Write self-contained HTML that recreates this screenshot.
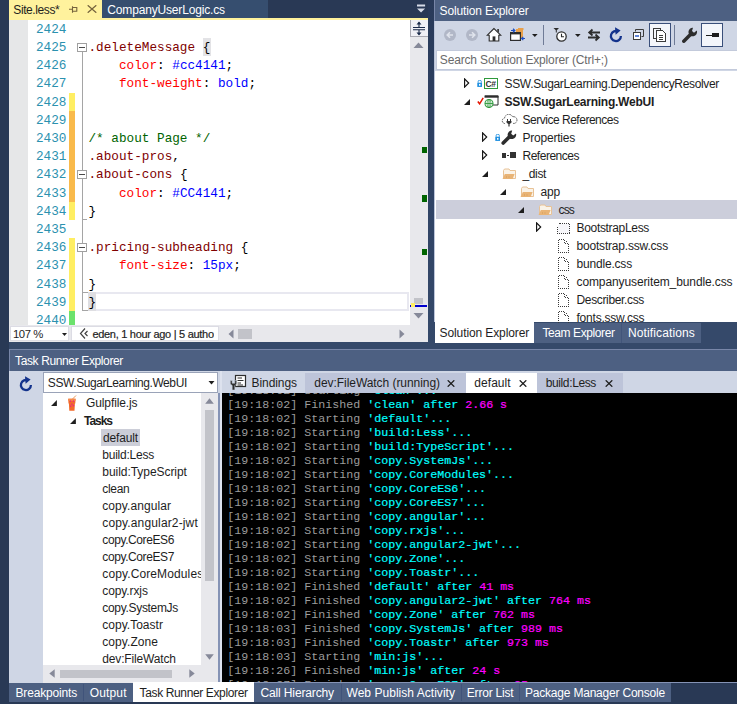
<!DOCTYPE html><html><head><meta charset="utf-8"><title>Visual Studio</title><style>
*{box-sizing:border-box;margin:0;padding:0}
html,body{width:737px;height:704px;overflow:hidden;background:#293955}
body{position:relative;font-family:"Liberation Sans",sans-serif;font-size:12px;color:#1e1e1e}
.a{position:absolute}
.t{position:absolute;white-space:pre;line-height:16px;height:16px}
.w{color:#fff}
.mono{font-family:"Liberation Mono",monospace}
.code{position:absolute;white-space:pre;font-family:"Liberation Mono",monospace;font-size:12.7px;line-height:18px;height:18px;left:88.5px;color:#000;transform-origin:0 60%;transform:scaleY(1.05)}
.ln{position:absolute;white-space:pre;font-family:"Liberation Mono",monospace;font-size:12.7px;line-height:18px;height:18px;left:36px;color:#2b91af;transform-origin:0 60%;transform:scaleY(1.05)}
.sel{color:#800000}.prop{color:#ff0000}.val{color:#0000ff}.com{color:#006400}
.con{position:absolute;white-space:pre;font-family:"Liberation Mono",monospace;font-size:11.67px;line-height:14px;height:14px;left:227.3px;color:#9c9c9c}
.cy{color:#00ffff;-webkit-text-stroke:0.2px}.mg{color:#ff00ff;-webkit-text-stroke:0.2px}
</style></head><body>
<div class="a" style="left:427.5px;top:0px;width:7.5px;height:349px;background:linear-gradient(#293a59,#2e4163 40%,#35496a);"></div>
<div class="a" style="left:9px;top:342px;width:728px;height:7px;background:#35496a;"></div>
<div class="a" style="left:435px;top:322px;width:302px;height:20px;background:#35496a;"></div>
<div class="a" style="left:9px;top:0px;width:93px;height:20px;background:#fff29d;"></div>
<div class="t " style="left:13.3px;top:1.8px;letter-spacing:-0.403px;">Site.less*</div>
<div class="a" style="left:102px;top:0px;width:166px;height:17.6px;background:#364e6f;"></div>
<div class="t w" style="left:107.3px;top:1.8px;letter-spacing:-0.169px;">CompanyUserLogic.cs</div>
<div class="a" style="left:9px;top:17.6px;width:419px;height:2.4px;background:#fff29d;"></div>
<svg class="a" style="left:68px;top:5px" width="11" height="9" viewBox="0 0 11 9"><path d="M1 4.3H4.5M4.5 1.2V7.8M4.5 2.5H8.800V6M4.500 6.200H9.300" fill="none" stroke="#75633d" stroke-width="1.1"/></svg>
<svg class="a" style="left:87px;top:5px" width="10" height="8" viewBox="0 0 10 8"><path d="M0.700 0.300L9.300 7.700M9.300 0.300L0.700 7.700" fill="none" stroke="#75633d" stroke-width="1.3"/></svg>
<svg class="a" style="left:416px;top:3.500px" width="10" height="9" viewBox="0 0 10 9"><path d="M1 0.400H9.100V2.500H1Z M1 4.500H9.100L5.050 8.500Z" fill="#d7dce8"/></svg>
<div class="a" style="left:9px;top:20px;width:401px;height:305px;background:#fff;"></div>
<div class="a" style="left:9px;top:20px;width:19px;height:305px;background:#e6e7e8;"></div>
<div class="a" style="left:410px;top:20px;width:18px;height:305px;background:#e8e8ec;"></div>
<div class="a" style="left:410px;top:20px;width:18px;height:17px;background:#f0f0f6;border-left:1px solid #a9a9b2;border-bottom:1px solid #a9a9b2"></div>
<svg class="a" style="left:412px;top:21px" width="14" height="15" viewBox="0 0 14 15"><path d="M1 6.5H13M1 8.7H13M7 1.5V6M7 9V13.5" stroke="#1b2a4a" stroke-width="1.1" fill="none"/><path d="M7 0.5L9.5 3.5H4.5ZM7 14.5L9.5 11.5H4.5Z" fill="#1b2a4a"/></svg>
<svg class="a" style="left:413px;top:42px" width="11" height="7" viewBox="0 0 11 7"><path d="M5.5 0.5L10.5 6H0.5Z" fill="#868999"/></svg>
<svg class="a" style="left:413px;top:312px" width="11" height="7" viewBox="0 0 11 7"><path d="M5.5 6.5L10.5 1H0.5Z" fill="#868999"/></svg>
<div class="a" style="left:422px;top:147px;width:5px;height:6px;background:#006400;"></div>
<div class="a" style="left:422px;top:194.6px;width:5px;height:7.4px;background:#006400;"></div>
<div class="a" style="left:422px;top:248.7px;width:5px;height:6.5px;background:#006400;"></div>
<div class="a" style="left:414px;top:298px;width:9px;height:6px;background:#c2c3c9;"></div>
<div class="a" style="left:410px;top:305px;width:17px;height:1.5px;background:#0000cd;"></div>
<div class="a" style="left:411px;top:303px;width:4px;height:4px;background:#ffee62;"></div>
<div class="a" style="left:69px;top:92.8px;width:5.5px;height:18.2px;background:#ffee62;"></div>
<div class="a" style="left:69px;top:111.0px;width:5.5px;height:91.0px;background:#f9ba4b;"></div>
<div class="a" style="left:69px;top:201.9px;width:5.5px;height:18.2px;background:#ffee62;"></div>
<div class="a" style="left:69px;top:238.3px;width:5.5px;height:72.8px;background:#ffee62;"></div>
<div class="a" style="left:69px;top:311.0px;width:5.5px;height:14.0px;background:#6ce26c;"></div>
<div class="a" style="left:82px;top:52px;width:1px;height:258px;background:#a5a5a5;"></div>
<div class="a" style="left:82px;top:219px;width:5px;height:1px;background:#a5a5a5;"></div>
<div class="a" style="left:82px;top:309.7px;width:6px;height:1px;background:#a5a5a5;"></div>
<div class="a" style="left:82px;top:292.2px;width:6px;height:1px;background:#a5a5a5;"></div>
<div class="a" style="left:77.200px;top:42.9px;width:9.600px;height:9.300px;background:#fff;border:1px solid #a0a0a0"></div>
<div class="a" style="left:79.2px;top:47.0px;width:5.6px;height:1.1px;background:#4a4a4a;"></div>
<div class="a" style="left:77.200px;top:169.9px;width:9.600px;height:9.300px;background:#fff;border:1px solid #a0a0a0"></div>
<div class="a" style="left:79.2px;top:174.0px;width:5.6px;height:1.1px;background:#4a4a4a;"></div>
<div class="a" style="left:77.200px;top:242.9px;width:9.600px;height:9.300px;background:#fff;border:1px solid #a0a0a0"></div>
<div class="a" style="left:79.2px;top:247.0px;width:5.6px;height:1.1px;background:#4a4a4a;"></div>
<div class="a" style="left:88px;top:291.800px;width:321px;height:18.800px;border-top:2px solid #e8e8f0;border-bottom:2px solid #e8e8f0;border-right:2px solid #e8e8f0"></div>
<div class="a" style="left:88px;top:292px;width:7.8px;height:18.5px;background:#dedee2;"></div>
<div class="a" style="left:203.2px;top:38.2px;width:7.6px;height:17.8px;background:#e3e3e6;"></div>
<div class="a" style="left:9px;top:20px;width:401px;height:305px;overflow:hidden"><div class="a" style="left:-9px;top:-20px">
<div class="ln" style="top:20.9px">2424</div>
<div class="ln" style="top:39.09px">2425</div>
<div class="code" style="top:39.09px"><span class="sel">.deleteMessage</span> {</div>
<div class="ln" style="top:57.28px">2426</div>
<div class="code" style="top:57.28px">    <span class="prop">color</span>: <span class="val">#cc4141</span>;</div>
<div class="ln" style="top:75.47px">2427</div>
<div class="code" style="top:75.47px">    <span class="prop">font-weight</span>: <span class="val">bold</span>;</div>
<div class="ln" style="top:93.66px">2428</div>
<div class="ln" style="top:111.85px">2429</div>
<div class="ln" style="top:130.04px">2430</div>
<div class="code" style="top:130.04px"><span class="com">/* about Page */</span></div>
<div class="ln" style="top:148.23px">2431</div>
<div class="code" style="top:148.23px"><span class="sel">.about-pros</span>,</div>
<div class="ln" style="top:166.42px">2432</div>
<div class="code" style="top:166.42px"><span class="sel">.about-cons</span> {</div>
<div class="ln" style="top:184.61px">2433</div>
<div class="code" style="top:184.61px">    <span class="prop">color</span>: <span class="val">#CC4141</span>;</div>
<div class="ln" style="top:202.8px">2434</div>
<div class="code" style="top:202.8px">}</div>
<div class="ln" style="top:220.99px">2435</div>
<div class="ln" style="top:239.18px">2436</div>
<div class="code" style="top:239.18px"><span class="sel">.pricing-subheading</span> {</div>
<div class="ln" style="top:257.37px">2437</div>
<div class="code" style="top:257.37px">    <span class="prop">font-size</span>: <span class="val">15px</span>;</div>
<div class="ln" style="top:275.56px">2438</div>
<div class="code" style="top:275.56px">}</div>
<div class="ln" style="top:293.75px">2439</div>
<div class="code" style="top:293.75px">}</div>
<div class="ln" style="top:311.94px">2440</div>
</div></div>
<div class="a" style="left:9px;top:325px;width:419px;height:17px;background:#e8e8ec;"></div>
<div class="a" style="left:10px;top:326px;width:59px;height:15px;background:#fff;border:1px solid #dcdce4"></div>
<div class="t " style="left:13px;top:325.7px;font-size:11.3px;letter-spacing:-0.409px;">107 %</div>
<svg class="a" style="left:61.500px;top:332.500px" width="5" height="3" viewBox="0 0 5 3"><path d="M0 0H5L2.500 3Z" fill="#1e1e1e"/></svg>
<div class="a" style="left:71px;top:326px;width:148px;height:15px;background:#fff;border:1px solid #dcdce4"></div>
<svg class="a" style="left:79px;top:328px" width="9" height="11" viewBox="0 0 9 11"><path d="M6 0.5L1.5 5.5L6 10.5M8.5 3L6 5.5L8.5 8" fill="none" stroke="#424242" stroke-width="1.2"/></svg>
<div class="a" style="left:72px;top:326px;width:142.300px;height:15px;overflow:hidden"><div class="t" style="left:20.400px;top:-0.300px;font-size:11px;letter-spacing:-0.290px;-webkit-text-stroke:0.200px">eden, 1 hour ago | 5 authors</div></div>
<svg class="a" style="left:228px;top:329px" width="6" height="10" viewBox="0 0 6 10"><path d="M5.5 0.5V9.5L0.5 5Z" fill="#868999"/></svg>
<div class="a" style="left:238px;top:329px;width:14px;height:10px;background:#c2c3c9;"></div>
<svg class="a" style="left:399px;top:329px" width="6" height="10" viewBox="0 0 6 10"><path d="M0.5 0.5V9.5L5.5 5Z" fill="#868999"/></svg>
<div class="a" style="left:434px;top:0px;width:303px;height:20.5px;background:#4d6082;border-left:1px solid #7886a8"></div>
<div class="t w" style="left:439.6px;top:2.9px;letter-spacing:-0.141px;">Solution Explorer</div>
<div class="a" style="left:434px;top:20.5px;width:303px;height:51px;background:#cfd6e5;"></div>
<div class="a" style="left:435.5px;top:49.5px;width:302px;height:20.3px;background:#fff;border:1px solid #c3cadb"></div>
<div class="a" style="left:435px;top:69.8px;width:302px;height:1.4px;background:#cfd6e5;"></div>
<div class="t " style="left:439.8px;top:51.8px;color:#6a6a6a;letter-spacing:-0.154px;">Search Solution Explorer (Ctrl+;)</div>
<div class="a" style="left:435px;top:71.2px;width:302px;height:250.8px;background:#fff;"></div>
<div class="a" style="left:434px;top:20.5px;width:1.2px;height:301.5px;background:#bcc5da;"></div>
<svg class="a" style="left:443px;top:28px" width="14" height="14" viewBox="0 0 14 14"><circle cx="7" cy="7" r="6" fill="#b1b7c7"/><path d="M10 7H4.5M7 4.2L4.2 7L7 9.8" fill="none" stroke="#dfe3ec" stroke-width="1.6"/></svg>
<svg class="a" style="left:464.5px;top:28px" width="14" height="14" viewBox="0 0 14 14"><circle cx="7" cy="7" r="6" fill="#b1b7c7"/><path d="M4 7H9.5M7 4.2L9.8 7L7 9.8" fill="none" stroke="#dfe3ec" stroke-width="1.6"/></svg>
<svg class="a" style="left:486px;top:27px" width="16" height="15" viewBox="0 0 16 15"><path d="M8 1.500L1.300 8.200H3.200V14H12.800V8.200H14.700Z" fill="#fff" stroke="#2d2d2d" stroke-width="1.100" stroke-linejoin="miter"/><path d="M11.300 2H12.900V5.800L11.300 4.200Z" fill="#2d2d2d"/><rect x="6.600" y="9.400" width="2.800" height="4.600" fill="#2d2d2d"/></svg>
<svg class="a" style="left:509px;top:27px" width="17" height="15" viewBox="0 0 17 15"><path d="M7 2H14V11H7Z" fill="#e8a04a"/><path d="M9 1H14.5V3H9Z" fill="#e8a04a"/><rect x="1.6" y="5.6" width="9.8" height="7.8" fill="#fff" stroke="#2d2d2d" stroke-width="1.2"/><rect x="1" y="5" width="11" height="2.4" fill="#2d2d2d"/><path d="M2 3.5H5M4 1.8L5.8 3.5L4 5.2" stroke="#1c4fc4" stroke-width="1.2" fill="none"/><path d="M16 11.5H13.2M14.3 9.8L12.6 11.5L14.3 13.2" stroke="#1c4fc4" stroke-width="1.2" fill="none"/></svg>
<svg class="a" style="left:531.500px;top:33.500px" width="6" height="3" viewBox="0 0 6 3"><path d="M0 0H5.600L2.800 3Z" fill="#1e1e1e"/></svg>
<div class="a" style="left:543px;top:25px;width:1px;height:20px;background:#6f7b96"></div>
<svg class="a" style="left:553px;top:27px" width="15" height="16" viewBox="0 0 15 16"><circle cx="8.5" cy="9.5" r="4.7" fill="#fff" stroke="#2d2d2d" stroke-width="1.3"/><path d="M8.5 6.8V9.8H11" fill="none" stroke="#2d2d2d" stroke-width="1.1"/><path d="M0.5 1H6L3.8 3.2V5.5H2.8V3.2Z" fill="#2d2d2d"/></svg>
<svg class="a" style="left:575px;top:33.500px" width="6" height="3" viewBox="0 0 6 3"><path d="M0 0H5.600L2.800 3Z" fill="#1e1e1e"/></svg>
<svg class="a" style="left:587px;top:28px" width="14" height="14" viewBox="0 0 14 14"><path d="M13 4.500H2.500M5.500 1.500L2.200 4.500L5.500 7.500" fill="none" stroke="#2d2d2d" stroke-width="1.800"/><path d="M1 9.500H11.500M8.500 6.500L11.800 9.500L8.500 12.500" fill="none" stroke="#2d2d2d" stroke-width="1.800"/></svg>
<svg class="a" style="left:609px;top:27px" width="14" height="16" viewBox="0 0 14 16"><path d="M9.200 4.600A5 5 0 1 0 11.900 9" fill="none" stroke="#14338c" stroke-width="2.300"/><path d="M6 0.300L11.600 3.600L6.600 7.800Z" fill="#14338c"/></svg>
<svg class="a" style="left:632px;top:28px" width="13" height="13" viewBox="0 0 13 13"><path d="M3.5 3.5V1.5H11.5V8.5H9.5" fill="none" stroke="#3b3b3b" stroke-width="1"/><rect x="1.5" y="4.5" width="7" height="7" fill="#fff" stroke="#3b3b3b" stroke-width="1"/><path d="M3 8H7" stroke="#1c4fc4" stroke-width="1.4"/></svg>
<div class="a" style="left:649px;top:23px;width:22px;height:24px;background:#f4f6fb;border:1px solid #3a4f7a"></div>
<svg class="a" style="left:652px;top:27px" width="16" height="16" viewBox="0 0 16 16" shape-rendering="crispEdges"><path d="M4.500 11.500H1.500V1.500H8.500V3" fill="none" stroke="#3b3b3b" stroke-width="1"/><path d="M4.500 3.500H10.500L13.500 6.500V14.500H4.500Z" fill="#fff" stroke="#3b3b3b" stroke-width="1"/><path d="M7 8.500H11M7 10.500H11M7 12.500H11" stroke="#3b3b3b" stroke-width="1"/></svg>
<div class="a" style="left:674px;top:25px;width:1px;height:20px;background:#6f7b96"></div>
<svg class="a" style="left:682px;top:27px" width="16" height="16" viewBox="0 0 16 16"><path d="M1.800 14.200L8.200 7.800" stroke="#2d2d2d" stroke-width="3.500" stroke-linecap="round"/><path d="M14.800 3.600A4.300 4.300 0 1 1 11 0.700L10 4L12 5.800Z" fill="#2d2d2d"/></svg>
<div class="a" style="left:701px;top:23px;width:22px;height:24px;background:#f4f6fb;border:1px solid #3a4f7a"></div>
<div class="a" style="left:706px;top:35px;width:13px;height:1.4px;background:#1e1e1e"></div><div class="a" style="left:712px;top:32.5px;width:7px;height:4px;background:#1e1e1e"></div>
<div class="a" style="left:436px;top:200px;width:301px;height:18.7px;background:#cccedb;"></div>
<svg class="a" style="left:463.7px;top:78.3px" width="6" height="10" viewBox="0 0 6 10"><path d="M0.600 0.900L4.700 5L0.600 9.100Z" fill="#fff" stroke="#111" stroke-width="1.150"/></svg>
<svg class="a" style="left:476.5px;top:79.8px" width="5.500" height="7.300" viewBox="0 0 6 8"><rect x="0.300" y="3" width="5.400" height="4.600" fill="#1e8fe0"/><path d="M1.300 3V1.600A1.700 1.400 0 0 1 4.700 1.600V3" fill="none" stroke="#1e8fe0" stroke-width="1"/><rect x="2.200" y="4.300" width="1.600" height="2" fill="#fff"/></svg>
<div class="a" style="left:484px;top:77.5px;width:14px;height:11px;background:#fff;border:1px solid #2f9a3c"></div>
<div class="t" style="left:485.5px;top:75.7px;font-size:8.500px;font-weight:bold;letter-spacing:-0.400px;color:#333">C#</div>
<div class="t " style="left:504.5px;top:76px;letter-spacing:-0.342px;">SSW.SugarLearning.DependencyResolver</div>
<svg class="a" style="left:464px;top:99px" width="6" height="6" viewBox="0 0 6 6"><path d="M6 0V6H0Z" fill="#1e1e1e"/></svg>
<svg class="a" style="left:476.5px;top:97px" width="7" height="8" viewBox="0 0 7 8"><path d="M0.8 4.5L2.6 6.8L6.2 0.8" fill="none" stroke="#e51400" stroke-width="1.5"/></svg>
<svg class="a" style="left:484px;top:95px" width="15" height="13" viewBox="0 0 15 13"><path d="M1 1H14V10H9" fill="none" stroke="#2d2d2d" stroke-width="1"/><rect x="0.5" y="0.5" width="14" height="2.2" fill="#2d2d2d"/><circle cx="5" cy="8.500" r="4" fill="#fff" stroke="#2f9a3c" stroke-width="1.100"/><path d="M1 8.500H9M5 4.500V12.500" stroke="#2f9a3c" stroke-width="0.900" fill="none"/><ellipse cx="5" cy="8.500" rx="2" ry="4" fill="none" stroke="#2f9a3c" stroke-width="0.700"/></svg>
<div class="t " style="left:504.5px;top:94px;font-weight:bold;letter-spacing:-0.245px;">SSW.SugarLearning.WebUI</div>
<svg class="a" style="left:501px;top:114px" width="17" height="13" viewBox="0 0 17 13"><path d="M4 9.5H3.5A2.8 2.8 0 0 1 3.6 4A4.2 4.2 0 0 1 11.6 2.8A3.4 3.4 0 0 1 13.5 9.4H12" fill="#fff" stroke="#555" stroke-width="1" stroke-dasharray="1.6 0.8"/><path d="M6.5 5V7M9.5 5V7" stroke="#333" stroke-width="1"/><path d="M5.5 7H10.5V8.5L8.8 10H7.2L5.500 8.500Z" fill="#333"/><path d="M8 10V12.500" stroke="#333" stroke-width="1.2"/></svg>
<div class="t " style="left:522.5px;top:112px;letter-spacing:-0.484px;">Service References</div>
<svg class="a" style="left:481.7px;top:132.3px" width="6" height="10" viewBox="0 0 6 10"><path d="M0.600 0.900L4.700 5L0.600 9.100Z" fill="#fff" stroke="#111" stroke-width="1.150"/></svg>
<svg class="a" style="left:494.5px;top:133.8px" width="5.500" height="7.300" viewBox="0 0 6 8"><rect x="0.300" y="3" width="5.400" height="4.600" fill="#1e8fe0"/><path d="M1.300 3V1.600A1.700 1.400 0 0 1 4.700 1.600V3" fill="none" stroke="#1e8fe0" stroke-width="1"/><rect x="2.200" y="4.300" width="1.600" height="2" fill="#fff"/></svg>
<svg class="a" style="left:501px;top:130px" width="16" height="15" viewBox="0 0 16 15"><path d="M2.200 13L8.200 7" stroke="#2d2d2d" stroke-width="3.600" stroke-linecap="round"/><path d="M15 3.500A4.300 4.300 0 1 1 11.200 0.500L10.200 3.800L12.200 5.600Z" fill="#2d2d2d"/></svg>
<div class="t " style="left:522.5px;top:130px;letter-spacing:-0.220px;">Properties</div>
<svg class="a" style="left:481.7px;top:150.3px" width="6" height="10" viewBox="0 0 6 10"><path d="M0.600 0.900L4.700 5L0.600 9.100Z" fill="#fff" stroke="#111" stroke-width="1.150"/></svg>
<div class="a" style="left:502px;top:153px;width:4px;height:4.500px;background:#333"></div><div class="a" style="left:506.500px;top:154.5px;width:2.500px;height:1.200px;background:#333"></div><div class="a" style="left:510px;top:151.5px;width:6.200px;height:6.500px;background:#333"></div>
<div class="t " style="left:522.5px;top:148px;letter-spacing:-0.487px;">References</div>
<svg class="a" style="left:482px;top:171px" width="6" height="6" viewBox="0 0 6 6"><path d="M6 0V6H0Z" fill="#1e1e1e"/></svg>
<svg class="a" style="left:501.8px;top:167.5px" width="15" height="12" viewBox="0 0 15 12"><path d="M1.500 10.500V2.500L2.500 1H7L8 2.500H13.500V10.500Z" fill="#faf3e8" stroke="#e8c296" stroke-width="1"/><path d="M0.600 11L2.800 6H12.600L10.600 11Z" fill="#e9b476"/><rect x="4" y="8.500" width="1" height="1" fill="#d39a58"/><rect x="6.500" y="8.500" width="1" height="1" fill="#d39a58"/></svg>
<div class="t " style="left:522.5px;top:166px;letter-spacing:-0.372px;">_dist</div>
<svg class="a" style="left:500px;top:189px" width="6" height="6" viewBox="0 0 6 6"><path d="M6 0V6H0Z" fill="#1e1e1e"/></svg>
<svg class="a" style="left:519.8px;top:185.5px" width="15" height="12" viewBox="0 0 15 12"><path d="M1.500 10.500V2.500L2.500 1H7L8 2.500H13.500V10.500Z" fill="#faf3e8" stroke="#e8c296" stroke-width="1"/><path d="M0.600 11L2.800 6H12.600L10.600 11Z" fill="#e9b476"/><rect x="4" y="8.500" width="1" height="1" fill="#d39a58"/><rect x="6.500" y="8.500" width="1" height="1" fill="#d39a58"/></svg>
<div class="t " style="left:540.5px;top:184px;letter-spacing:-0.177px;">app</div>
<svg class="a" style="left:518px;top:207px" width="6" height="6" viewBox="0 0 6 6"><path d="M6 0V6H0Z" fill="#1e1e1e"/></svg>
<svg class="a" style="left:537.8px;top:203.5px" width="15" height="12" viewBox="0 0 15 12"><path d="M1.500 10.500V2.500L2.500 1H7L8 2.500H13.500V10.500Z" fill="#faf3e8" stroke="#e8c296" stroke-width="1"/><path d="M0.600 11L2.800 6H12.600L10.600 11Z" fill="#e9b476"/><rect x="4" y="8.500" width="1" height="1" fill="#d39a58"/><rect x="6.500" y="8.500" width="1" height="1" fill="#d39a58"/></svg>
<div class="t " style="left:558.5px;top:202px;letter-spacing:-0.833px;">css</div>
<svg class="a" style="left:536.2px;top:222.3px" width="6" height="10" viewBox="0 0 6 10"><path d="M0.600 0.900L4.700 5L0.600 9.100Z" fill="#fff" stroke="#111" stroke-width="1.150"/></svg>
<svg class="a" style="left:557px;top:223px" width="14" height="12" viewBox="0 0 14 12" shape-rendering="crispEdges"><path d="M2.500 0.500H12.500V10.500H0.500V2.500Z" fill="#f7f7fa" stroke="#3a3a3a" stroke-width="1" stroke-dasharray="1 1"/></svg>
<div class="t " style="left:576.5px;top:220px;letter-spacing:-0.325px;">BootstrapLess</div>
<svg class="a" style="left:558px;top:238.5px" width="12" height="14" viewBox="0 0 12 14" shape-rendering="crispEdges"><path d="M0.500 0.500H6.500M6.500 0.500V4.500H10.500M10.500 4.500V13.500M10.500 13.500H0.500M0.500 13.500V0.500M8.500 1.500V2.500" fill="none" stroke="#3a3a3a" stroke-width="1" stroke-dasharray="1 1"/></svg>
<div class="t " style="left:576.5px;top:238px;letter-spacing:-0.189px;">bootstrap.ssw.css</div>
<svg class="a" style="left:558px;top:256.5px" width="12" height="14" viewBox="0 0 12 14" shape-rendering="crispEdges"><path d="M0.500 0.500H6.500M6.500 0.500V4.500H10.500M10.500 4.500V13.500M10.500 13.500H0.500M0.500 13.500V0.500M8.500 1.500V2.500" fill="none" stroke="#3a3a3a" stroke-width="1" stroke-dasharray="1 1"/></svg>
<div class="t " style="left:576.5px;top:256px;letter-spacing:-0.188px;">bundle.css</div>
<svg class="a" style="left:558px;top:274.5px" width="12" height="14" viewBox="0 0 12 14" shape-rendering="crispEdges"><path d="M0.500 0.500H6.500M6.500 0.500V4.500H10.500M10.500 4.500V13.500M10.500 13.500H0.500M0.500 13.500V0.500M8.500 1.500V2.500" fill="none" stroke="#3a3a3a" stroke-width="1" stroke-dasharray="1 1"/></svg>
<div class="t " style="left:576.5px;top:274px;letter-spacing:-0.106px;">companyuseritem_bundle.css</div>
<svg class="a" style="left:558px;top:292.5px" width="12" height="14" viewBox="0 0 12 14" shape-rendering="crispEdges"><path d="M0.500 0.500H6.500M6.500 0.500V4.500H10.500M10.500 4.500V13.500M10.500 13.500H0.500M0.500 13.500V0.500M8.500 1.500V2.500" fill="none" stroke="#3a3a3a" stroke-width="1" stroke-dasharray="1 1"/></svg>
<div class="t " style="left:576.5px;top:292px;letter-spacing:-0.349px;">Describer.css</div>
<svg class="a" style="left:558px;top:310.5px" width="12" height="14" viewBox="0 0 12 14" shape-rendering="crispEdges"><path d="M0.500 0.500H6.500M6.500 0.500V4.500H10.500M10.500 4.500V13.500M10.500 13.500H0.500M0.500 13.500V0.500M8.500 1.500V2.500" fill="none" stroke="#3a3a3a" stroke-width="1" stroke-dasharray="1 1"/></svg>
<div class="t " style="left:576.5px;top:310px;letter-spacing:-0.222px;">fonts.ssw.css</div>
<div class="a" style="left:435px;top:322px;width:99px;height:20.5px;background:#fff;"></div>
<div class="t " style="left:439.6px;top:324.7px;letter-spacing:-0.111px;">Solution Explorer</div>
<div class="a" style="left:534px;top:322.5px;width:86.5px;height:20px;background:#4d6082;"></div>
<div class="t w" style="left:542.5px;top:324.7px;letter-spacing:-0.413px;">Team Explorer</div>
<div class="a" style="left:620.5px;top:322.5px;width:1px;height:20px;background:#42557a;"></div>
<div class="a" style="left:621.5px;top:322.5px;width:79.5px;height:20px;background:#4d6082;"></div>
<div class="t w" style="left:628px;top:324.7px;letter-spacing:0.125px;">Notifications</div>
<div class="a" style="left:9px;top:349px;width:728px;height:21.5px;background:#4d6082;border-left:1px solid #7886a8;border-top:1px solid #7886a8"></div>
<div class="t w" style="left:15px;top:353px;letter-spacing:-0.370px;">Task Runner Explorer</div>
<div class="a" style="left:9px;top:370.5px;width:728px;height:312.5px;background:#cfd6e5;"></div>
<svg class="a" style="left:19px;top:376px" width="14" height="16" viewBox="0 0 14 16"><path d="M9.200 4.600A5 5 0 1 0 11.900 9" fill="none" stroke="#14338c" stroke-width="2.300"/><path d="M6 0.300L11.600 3.600L6.600 7.800Z" fill="#14338c"/></svg>
<div class="a" style="left:43px;top:372px;width:175px;height:21px;background:#fff;border:1px solid #9aa3b8"></div>
<div class="t " style="left:47.8px;top:375px;letter-spacing:-0.414px;">SSW.SugarLearning.WebUI</div>
<svg class="a" style="left:207.500px;top:380.500px" width="7" height="4" viewBox="0 0 7 4"><path d="M0.500 0H6.500L3.500 3.600Z" fill="#1e1e1e"/></svg>
<div class="a" style="left:43px;top:393px;width:158.5px;height:272px;background:#fff;"></div>
<div class="a" style="left:201.2px;top:393px;width:16.8px;height:272px;background:#e8e8ec;"></div>
<div class="a" style="left:43px;top:665px;width:175px;height:18px;background:#e8e8ec;"></div>
<svg class="a" style="left:205px;top:398px" width="9" height="6" viewBox="0 0 9 6"><path d="M4.500 0.300L8.800 5.700H0.200Z" fill="#868999"/></svg>
<div class="a" style="left:205px;top:410px;width:9px;height:170.5px;background:#c2c3c9;"></div>
<svg class="a" style="left:205px;top:654px" width="9" height="6" viewBox="0 0 9 6"><path d="M4.500 5.700L8.800 0.300H0.200Z" fill="#868999"/></svg>
<svg class="a" style="left:49px;top:669px" width="6" height="9" viewBox="0 0 6 9"><path d="M0.300 4.500L5.700 0.200V8.800Z" fill="#868999"/></svg>
<div class="a" style="left:60px;top:669.5px;width:112px;height:8px;background:#c2c3c9;"></div>
<svg class="a" style="left:189px;top:669px" width="6" height="9" viewBox="0 0 6 9"><path d="M5.700 4.500L0.300 0.200V8.800Z" fill="#868999"/></svg>
<svg class="a" style="left:50.7px;top:400.2px" width="6" height="6" viewBox="0 0 6 6"><path d="M5.900 0.100V5.900H0.100Z" fill="#1e1e1e"/></svg>
<svg class="a" style="left:67px;top:395px" width="11" height="17" viewBox="0 0 11 17"><path d="M5.500 4L9 0.500" stroke="#e8975a" stroke-width="1"/><path d="M1.200 3.800H8.600L8.300 8.500H7.900L7.500 15.800H2.300L1.900 8.500H1.500Z" fill="#f26a2b"/><path d="M1.200 3.800H8.600L8.400 6H1.400Z" fill="#f58a4a"/><rect x="2.800" y="5.500" width="1.300" height="1.300" fill="#e91e8c"/><rect x="5.800" y="5.500" width="1.300" height="1.300" fill="#e91e8c"/><rect x="4.300" y="8.500" width="1.300" height="1.300" fill="#e91e8c"/><rect x="3" y="10.500" width="1.300" height="1.300" fill="#e91e8c"/><rect x="5.800" y="10" width="1.300" height="1.300" fill="#e91e8c"/></svg>
<div class="t " style="left:86px;top:395px;height:17px;line-height:17px;letter-spacing:-0.108px;">Gulpfile.js</div>
<svg class="a" style="left:70.3px;top:418px" width="6" height="6" viewBox="0 0 6 6"><path d="M5.900 0.100V5.900H0.100Z" fill="#1e1e1e"/></svg>
<div class="t " style="left:84px;top:412.7px;height:17px;line-height:17px;font-weight:bold;letter-spacing:-1.028px;">Tasks</div>
<div class="a" style="left:101px;top:429px;width:39px;height:17px;background:#ccced8;"></div>
<div class="a" style="left:43px;top:393px;width:158px;height:272px;overflow:hidden"><div class="a" style="left:-43px;top:-393px">
<div class="t " style="left:103px;top:430px;height:17px;line-height:17px;letter-spacing:-0.147px;">default</div>
<div class="t " style="left:102.3px;top:447px;height:17px;line-height:17px;letter-spacing:-0.235px;">build:Less</div>
<div class="t " style="left:102.3px;top:464px;height:17px;line-height:17px;letter-spacing:-0.049px;">build:TypeScript</div>
<div class="t " style="left:102.3px;top:481px;height:17px;line-height:17px;letter-spacing:-0.298px;">clean</div>
<div class="t " style="left:102.3px;top:498px;height:17px;line-height:17px;letter-spacing:0.073px;">copy.angular</div>
<div class="t " style="left:102.3px;top:515px;height:17px;line-height:17px;letter-spacing:0.143px;">copy.angular2-jwt</div>
<div class="t " style="left:102.3px;top:532px;height:17px;line-height:17px;letter-spacing:-0.407px;">copy.CoreES6</div>
<div class="t " style="left:102.3px;top:549px;height:17px;line-height:17px;letter-spacing:-0.407px;">copy.CoreES7</div>
<div class="t " style="left:102.3px;top:566px;height:17px;line-height:17px;letter-spacing:0.114px;">copy.CoreModules</div>
<div class="t " style="left:102.3px;top:583px;height:17px;line-height:17px;letter-spacing:-0.106px;">copy.rxjs</div>
<div class="t " style="left:102.3px;top:600px;height:17px;line-height:17px;letter-spacing:-0.316px;">copy.SystemJs</div>
<div class="t " style="left:102.3px;top:617px;height:17px;line-height:17px;letter-spacing:0.012px;">copy.Toastr</div>
<div class="t " style="left:102.3px;top:634px;height:17px;line-height:17px;letter-spacing:0.060px;">copy.Zone</div>
<div class="t " style="left:102.3px;top:651px;height:17px;line-height:17px;letter-spacing:-0.153px;">dev:FileWatch</div>
</div></div>
<div class="a" style="left:218px;top:393px;width:2px;height:289.5px;background:#8593b5;"></div>
<div class="a" style="left:220px;top:371px;width:2px;height:311.5px;background:#dde2ee;"></div>
<div class="a" style="left:305px;top:372.8px;width:160.5px;height:20px;background:#bdc4d9;"></div>
<div class="a" style="left:465.5px;top:372.8px;width:71.5px;height:20px;background:#fff;"></div>
<div class="a" style="left:537px;top:372.8px;width:85.5px;height:20px;background:#bdc4d9;"></div>
<svg class="a" style="left:229px;top:374px" width="18" height="17" viewBox="0 0 18 17"><rect x="6.500" y="1.500" width="10" height="11" fill="#fff" stroke="#2d2d2d" stroke-width="1.200"/><path d="M8.500 4H13M8.500 6.500H14.500M8.500 9H12M8.500 11H14" stroke="#2d2d2d" stroke-width="1"/><path d="M1.300 6.500V10L3.200 11.500V16H5.800V11.500L7.700 10V6.500H5.800V9.200H3.200V6.500Z" fill="#2d2d2d" stroke="#cfd6e5" stroke-width="0.500"/></svg>
<div class="t " style="left:251.5px;top:375px;letter-spacing:-0.066px;">Bindings</div>
<div class="t " style="left:314.3px;top:375px;letter-spacing:-0.054px;">dev:FileWatch (running)</div>
<div class="t " style="left:474.3px;top:375px;letter-spacing:0.053px;">default</div>
<div class="t " style="left:545.7px;top:375px;letter-spacing:-0.375px;">build:Less</div>
<svg class="a" style="left:446.5px;top:379.500px" width="8" height="7" viewBox="0 0 8 7"><path d="M0.700 0.300L7.300 6.700M7.300 0.300L0.700 6.700" stroke="#1e1e1e" stroke-width="1.300" fill="none"/></svg>
<svg class="a" style="left:518.7px;top:379.500px" width="8" height="7" viewBox="0 0 8 7"><path d="M0.700 0.300L7.300 6.700M7.300 0.300L0.700 6.700" stroke="#1e1e1e" stroke-width="1.300" fill="none"/></svg>
<svg class="a" style="left:605px;top:379.500px" width="8" height="7" viewBox="0 0 8 7"><path d="M0.700 0.300L7.300 6.700M7.300 0.300L0.700 6.700" stroke="#1e1e1e" stroke-width="1.300" fill="none"/></svg>
<div class="a" style="left:221.7px;top:392.7px;width:515.3px;height:290.3px;background:#000;"></div>
<div class="a" style="left:221.700px;top:392.700px;width:515.300px;height:290.300px;overflow:hidden"><div class="a" style="left:-221.700px;top:-392.700px">
<div class="con" style="top:384px">[19:18:02] Starting <span class="cy">'clean'...</span></div>
<div class="con" style="top:398px">[19:18:02] Finished <span class="cy">'clean' after</span> <span class="mg">2.66 s</span></div>
<div class="con" style="top:412px">[19:18:02] Starting <span class="cy">'default'...</span></div>
<div class="con" style="top:426px">[19:18:02] Starting <span class="cy">'build:Less'...</span></div>
<div class="con" style="top:440px">[19:18:02] Starting <span class="cy">'build:TypeScript'...</span></div>
<div class="con" style="top:454px">[19:18:02] Starting <span class="cy">'copy.SystemJs'...</span></div>
<div class="con" style="top:468px">[19:18:02] Starting <span class="cy">'copy.CoreModules'...</span></div>
<div class="con" style="top:482px">[19:18:02] Starting <span class="cy">'copy.CoreES6'...</span></div>
<div class="con" style="top:496px">[19:18:02] Starting <span class="cy">'copy.CoreES7'...</span></div>
<div class="con" style="top:510px">[19:18:02] Starting <span class="cy">'copy.angular'...</span></div>
<div class="con" style="top:524px">[19:18:02] Starting <span class="cy">'copy.rxjs'...</span></div>
<div class="con" style="top:538px">[19:18:02] Starting <span class="cy">'copy.angular2-jwt'...</span></div>
<div class="con" style="top:552px">[19:18:02] Starting <span class="cy">'copy.Zone'...</span></div>
<div class="con" style="top:566px">[19:18:02] Starting <span class="cy">'copy.Toastr'...</span></div>
<div class="con" style="top:580px">[19:18:02] Finished <span class="cy">'default' after</span> <span class="mg">41 ms</span></div>
<div class="con" style="top:594px">[19:18:02] Finished <span class="cy">'copy.angular2-jwt' after</span> <span class="mg">764 ms</span></div>
<div class="con" style="top:608px">[19:18:02] Finished <span class="cy">'copy.Zone' after</span> <span class="mg">762 ms</span></div>
<div class="con" style="top:622px">[19:18:03] Finished <span class="cy">'copy.SystemJs' after</span> <span class="mg">989 ms</span></div>
<div class="con" style="top:636px">[19:18:03] Finished <span class="cy">'copy.Toastr' after</span> <span class="mg">973 ms</span></div>
<div class="con" style="top:650px">[19:18:03] Starting <span class="cy">'min:js'...</span></div>
<div class="con" style="top:664px">[19:18:26] Finished <span class="cy">'min:js' after</span> <span class="mg">24 s</span></div>
<div class="con" style="top:678px">[19:18:27] Finished <span class="cy">'copy.CoreES7' after</span> <span class="mg">25 s</span></div>
</div></div>
<div class="a" style="left:9px;top:683px;width:662px;height:19px;background:#4d6082;"></div>
<div class="a" style="left:222px;top:682px;width:515px;height:1px;background:#8593b5;"></div>
<div class="a" style="left:133px;top:682px;width:121px;height:20px;background:#fff;"></div>
<div class="a" style="left:83px;top:684px;width:1px;height:17px;background:#40537a;"></div>
<div class="a" style="left:340.5px;top:684px;width:1px;height:17px;background:#40537a;"></div>
<div class="a" style="left:460.5px;top:684px;width:1px;height:17px;background:#40537a;"></div>
<div class="a" style="left:519px;top:684px;width:1px;height:17px;background:#40537a;"></div>
<div class="t w" style="left:15.5px;top:684.5px;letter-spacing:-0.170px;">Breakpoints</div>
<div class="t w" style="left:89.7px;top:684.5px;letter-spacing:0.161px;">Output</div>
<div class="t " style="left:139.6px;top:684.5px;letter-spacing:-0.370px;">Task Runner Explorer</div>
<div class="t w" style="left:260.5px;top:684.5px;letter-spacing:-0.133px;">Call Hierarchy</div>
<div class="t w" style="left:346.5px;top:684.5px;letter-spacing:0.034px;">Web Publish Activity</div>
<div class="t w" style="left:466.8px;top:684.5px;letter-spacing:-0.209px;">Error List</div>
<div class="t w" style="left:525px;top:684.5px;letter-spacing:-0.207px;">Package Manager Console</div>
</body></html>
